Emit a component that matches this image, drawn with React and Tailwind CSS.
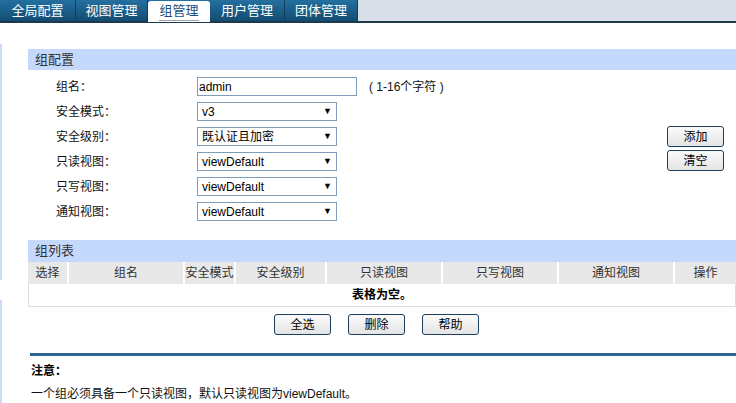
import React from "react";

const font = { fontFamily: '"Liberation Sans", "Noto Sans CJK SC", sans-serif' };

function Tab({ label, active, w }) {
  if (active) {
    return (
      <div className={`${w} h-[21px] mt-[1px] bg-white rounded-t-[3px] flex flex-col items-center justify-center`}>
        <span className="text-[13px] leading-[14px] text-[#1e4f7a] border-b border-[#9aa4ae] pb-[2px] mt-[2px]">{label}</span>
      </div>
    );
  }
  return (
    <div className={`${w} h-[21px] flex items-center justify-center text-white text-[13px] border-r border-[#123e5c] bg-gradient-to-b from-[#2470a0] via-[#1b5e89] to-[#144c72]`}>
      {label}
    </div>
  );
}

function Select({ value }) {
  return (
    <div className="w-[140px] h-[19px] border border-[#7f9db9] bg-white flex items-center justify-between pl-[4px] pr-[4px] text-[12px] text-black">
      <span>{value}</span>
      <span className="text-[9px] leading-none">▼</span>
    </div>
  );
}

function Btn({ label }) {
  return (
    <div className="w-[57px] h-[21px] border border-[#1d3f5e] rounded-[3px] bg-gradient-to-b from-[#fbfbfb] to-[#e4e4e4] flex items-center justify-center text-[12px] text-black">
      {label}
    </div>
  );
}

function Row({ label, children }) {
  return (
    <div className="flex items-center h-[19px]">
      <div className="w-[141px] text-[12px] text-[#111]">{label}</div>
      {children}
    </div>
  );
}

export default function App() {
  const cols = [
    ["选择", "w-[41px]"],
    ["组名", "w-[116px]"],
    ["安全模式", "w-[51px]"],
    ["安全级别", "w-[91px]"],
    ["只读视图", "w-[116px]"],
    ["只写视图", "w-[116px]"],
    ["通知视图", "w-[116px]"],
    ["操作", "flex-1"],
  ];
  return (
    <div className="w-[736px] h-[403px] bg-white overflow-hidden flex flex-col" style={font}>
      <div className="h-[23px] flex bg-[#d9dfe9] border-b-2 border-[#1d3a4c] shrink-0">
        <div className="flex bg-gradient-to-b from-[#2470a0] to-[#144c72]">
          <Tab label="全局配置" w="w-[76px]" />
          <Tab label="视图管理" w="w-[72px]" />
          <Tab label="组管理" w="w-[62px]" active />
          <Tab label="用户管理" w="w-[75px]" />
          <Tab label="团体管理" w="w-[73px]" />
        </div>
      </div>
      <div className="flex flex-1 min-h-0">
        <div className="w-[28px] shrink-0 flex flex-col pt-[21px]">
          <div className="w-[2px] h-[236px] bg-[#c9dcf8]" />
          <div className="w-[2px] h-[20px]" />
          <div className="w-[2px] flex-1 bg-[#c9dcf8]" />
        </div>
        <div className="flex-1 flex flex-col pt-[26px]">
          <div className="h-[21px] bg-[#c5d9fc] text-[13px] text-[#333] pl-[7px] flex items-center">组配置</div>
          <div className="flex pt-[7px]">
            <div className="flex flex-col gap-[6px] pl-[28px]">
              <Row label="组名：">
                <div className="w-[160px] h-[19px] border border-[#7f9db9] text-[12px] pl-[1px] flex items-center">admin</div>
                <span className="ml-[12px] text-[12px] text-[#111]">( 1-16个字符 )</span>
              </Row>
              <Row label="安全模式："><Select value="v3" /></Row>
              <Row label="安全级别："><Select value="既认证且加密" /></Row>
              <Row label="只读视图："><Select value="viewDefault" /></Row>
              <Row label="只写视图："><Select value="viewDefault" /></Row>
              <Row label="通知视图："><Select value="viewDefault" /></Row>
            </div>
            <div className="flex-1" />
            <div className="flex flex-col gap-[3px] pt-[49px] pr-[12px]">
              <Btn label="添加" />
              <Btn label="清空" />
            </div>
          </div>
          <div className="h-[22px] mt-[19px] bg-[#c5d9fc] text-[13px] text-[#333] pl-[7px] flex items-center">组列表</div>
          <div className="h-[22px] flex bg-[#e8e8e8] text-[12px] text-[#333]">
            {cols.map(([c, w], i) => (
              <div key={c} className={`${w} flex items-center justify-center ${i < cols.length - 1 ? "border-r-2 border-white" : ""}`}>{c}</div>
            ))}
          </div>
          <div className="h-[23px] border border-t-0 border-[#dddddd] flex items-center justify-center text-[12px] font-bold text-black">表格为空。</div>
          <div className="flex gap-[17px] justify-center pt-[7px] pr-[11px]">
            <Btn label="全选" />
            <Btn label="删除" />
            <Btn label="帮助" />
          </div>
          <div className="ml-[2px] mt-[18px] h-[3px] bg-[#2b6793]" />
          <div className="pl-[3px] pt-[6px] text-[12px] font-bold text-black">注意：</div>
          <div className="pl-[3px] pt-[5px] text-[12px] text-[#111]">一个组必须具备一个只读视图，默认只读视图为viewDefault。</div>
        </div>
      </div>
    </div>
  );
}
